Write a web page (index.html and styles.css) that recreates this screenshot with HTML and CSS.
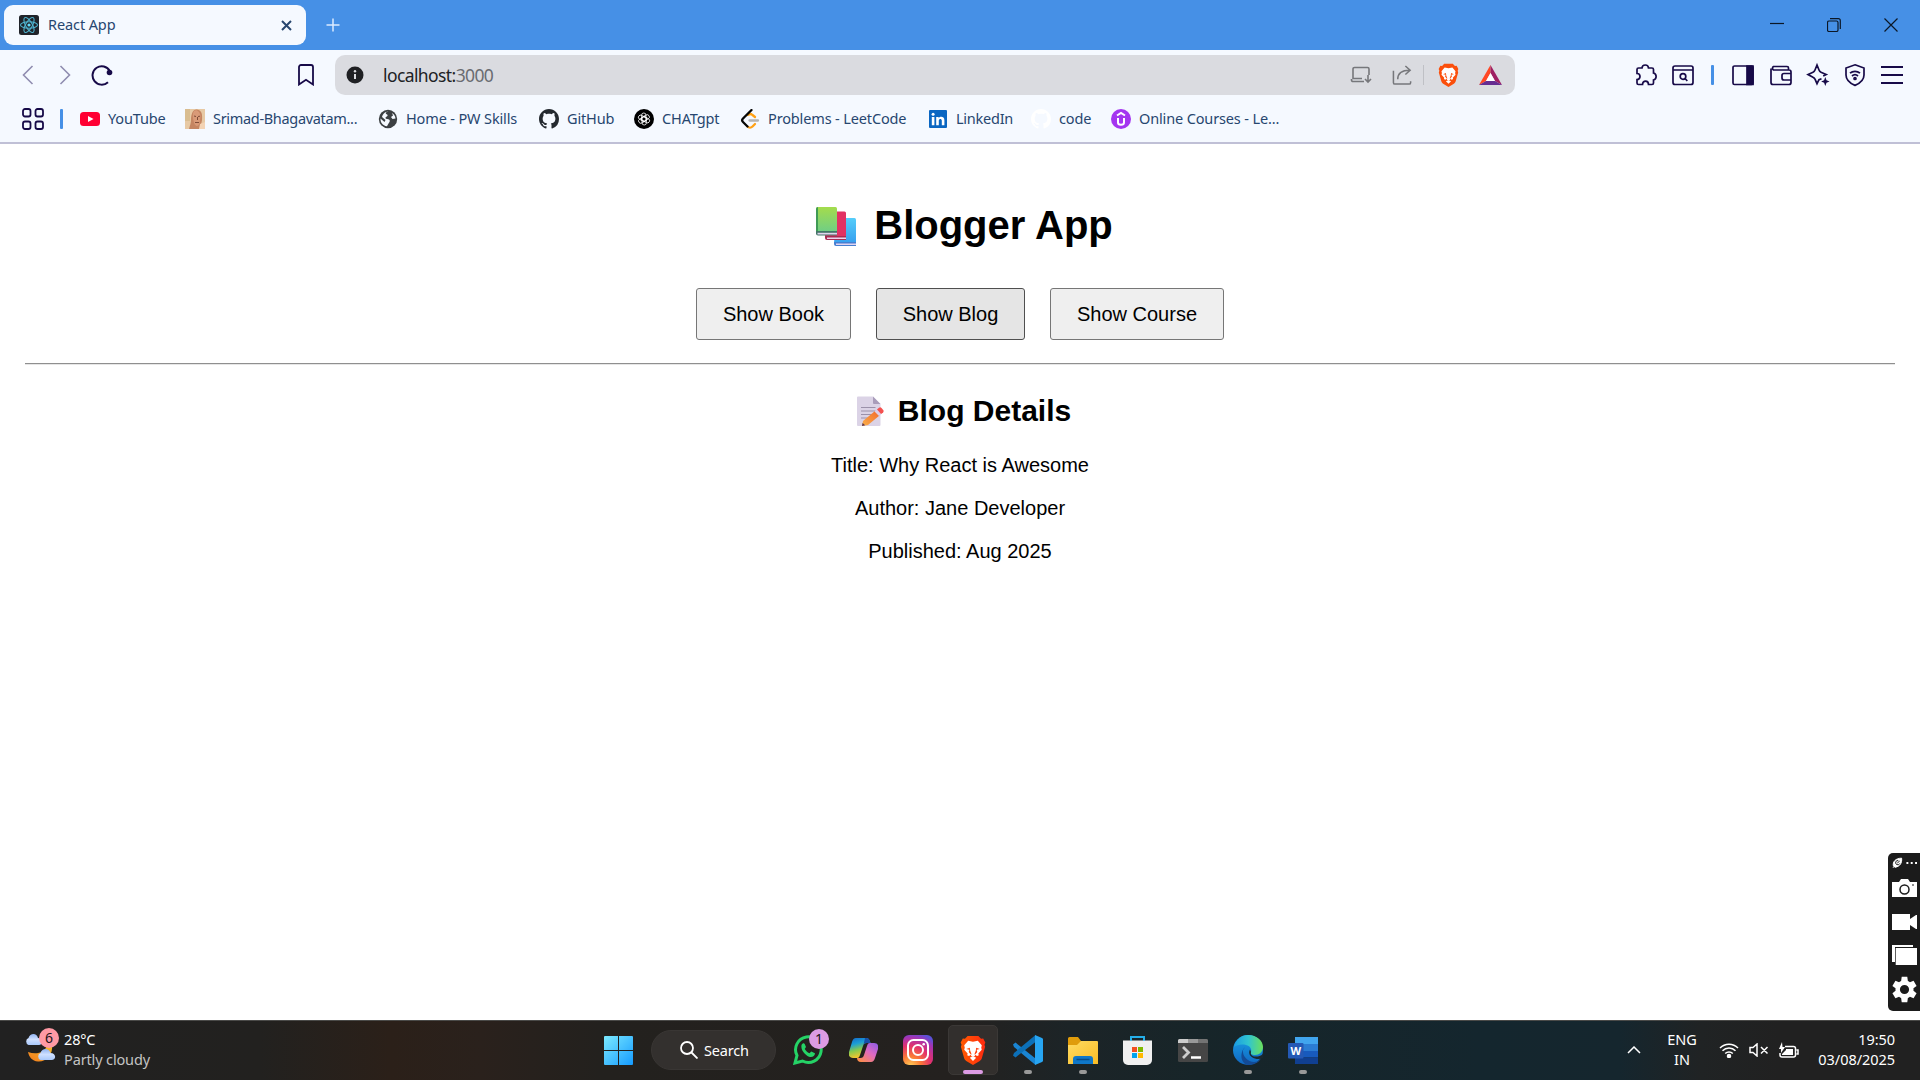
FILE: index.html
```
<!DOCTYPE html>
<html lang="en">
<head>
<meta charset="utf-8">
<title>React App</title>
<link rel="stylesheet" href="styles.css">
</head>
<body>
<svg width="0" height="0" class="defs" aria-hidden="true">
  <defs>
    <linearGradient id="braveGrad" x1="0" x2="1"><stop offset="0" stop-color="#ff5a00"/><stop offset="1" stop-color="#ff2a10"/></linearGradient>
    <symbol id="brave" viewBox="0 0 24 28">
      <path d="M7 1h10l2.500 2.600 2-.4L23.500 7l-.8 2 .6 2-3 10.500c-.4 1.200-1 2-2 2.700L12 28l-6.300-3.800c-1-.7-1.600-1.500-2-2.700L.7 11l.6-2-.8-2 2-3.800 2 .4z"/>
      <path fill="#fff" d="M12 6.200l4.500-.9 3.700 4.300-.5 2.200.5 2-3.200 3.400.4 1.600-1.600.8-2-1.200 2.200-2.600-.7-2 3-.8-3.300-1.200-.4 3-1.100 2.800.4 1.900-1.900.9-1.900-.9.400-1.900-1.100-2.800-.4-3-3.300 1.200 3 .8-.7 2 2.200 2.600-2 1.200-1.600-.8.400-1.600-3.200-3.400.5-2-.5-2.200 3.700-4.300zM12 19.800l3 1.500L12 24.200l-3-2.900z"/>
    </symbol>
    <symbol id="octocat" viewBox="0 0 16 16"><path d="M8 0C3.580 0 0 3.580 0 8c0 3.540 2.290 6.530 5.470 7.590.4.070.55-.17.55-.38 0-.19-.01-.82-.01-1.490-2.010.37-2.530-.49-2.690-.94-.09-.23-.48-.94-.82-1.130-.28-.15-.68-.52-.01-.53.63-.01 1.080.58 1.230.82.72 1.210 1.870.87 2.330.66.07-.52.28-.87.51-1.070-1.780-.2-3.640-.89-3.640-3.950 0-.87.31-1.590.82-2.150-.08-.2-.36-1.020.08-2.120 0 0 .67-.21 2.200.82.64-.18 1.320-.27 2-.27s1.360.09 2 .27c1.530-1.040 2.200-.82 2.200-.82.44 1.100.16 1.920.08 2.120.51.56.82 1.270.82 2.150 0 3.070-1.870 3.750-3.650 3.950.29.25.54.73.54 1.480 0 1.070-.01 1.930-.01 2.200 0 .21.15.46.55.38A8.010 8.010 0 0 0 16 8c0-4.420-3.580-8-8-8z"/></symbol>
  </defs>
</svg>

<div class="browser">
  <header class="tab-strip">
    <div class="tab">
      <svg class="favicon" viewBox="0 0 20 20"><rect width="20" height="20" rx="2.500" fill="#20232a"/><g fill="none" stroke="#4fb4d0" stroke-width="1.100"><ellipse cx="10" cy="10" rx="8.500" ry="3.300"/><ellipse cx="10" cy="10" rx="8.500" ry="3.300" transform="rotate(60 10 10)"/><ellipse cx="10" cy="10" rx="8.500" ry="3.300" transform="rotate(120 10 10)"/></g><circle cx="10" cy="10" r="1.600" fill="#61dafb"/></svg>
      <span class="tab-title">React App</span>
      <svg class="tab-close" viewBox="0 0 11 11"><path d="M1 1l9 9M10 1l-9 9"/></svg>
    </div>
    <svg class="new-tab" viewBox="0 0 14 14"><path d="M7 .5v13M.5 7h13"/></svg>
    <div class="window-controls">
      <svg viewBox="0 0 14 14"><path d="M0 5.500h14"/></svg>
      <svg viewBox="0 0 14 14"><rect x=".5" y="3" width="10.500" height="10.500" rx="1.500"/><path d="M3 .7h8.300a2 2 0 0 1 2 2V11"/></svg>
      <svg viewBox="0 0 14 14"><path d="M.5 .5l13 13M13.500 .5l-13 13"/></svg>
    </div>
  </header>

  <div class="toolbar">
    <svg class="nav-back" viewBox="0 0 12 20"><path d="M10.500 1L1.500 10l9 9"/></svg>
    <svg class="nav-forward" viewBox="0 0 12 20"><path d="M1.500 1l9 9-9 9"/></svg>
    <svg class="nav-reload" viewBox="0 0 22 22"><path d="M17 18.200A9.200 9.200 0 1 1 18.800 7"/><circle cx="18.500" cy="8.500" r="2.800"/></svg>
    <svg class="bookmark" viewBox="0 0 16 22"><path d="M1 3a2 2 0 0 1 2-2h10a2 2 0 0 1 2 2v17.500l-7-4.700-7 4.700z"/></svg>
    <div class="address-bar">
      <svg class="info" viewBox="0 0 18 18"><circle cx="9" cy="9" r="8.500" fill="#1f2023"/><path d="M9 8v5" stroke="#dcdce0" stroke-width="2"/><circle cx="9" cy="5.300" r="1.200" fill="#dcdce0"/></svg>
      <span class="url">localhost:<span class="port">3000</span></span>
      <svg class="gray install" viewBox="0 0 22 18"><path d="M12 12.500H3V3a1.500 1.500 0 0 1 1.500-1.500h13A1.500 1.500 0 0 1 19 3v6M1.500 13v1a1.500 1.500 0 0 0 1.500 1.500h11M18 9v6.500M15 13l3 3 3-3"/></svg>
      <svg class="gray share" viewBox="0 0 22 22"><path d="M1.500 6v12.500A1.500 1.500 0 0 0 3 20h15a1.500 1.500 0 0 0 1.500-1.500V17M6 15c0-6 3-9.500 12.500-9.500M14 1l5 4.500-5 4.500"/></svg>
      <span class="divider"></span>
      <svg class="shield"><use href="#brave"/></svg>
      <svg class="rewards" viewBox="0 0 23 20"><path d="M11.500 0L0 20l7-4 4.500-8z" fill="#ff4724"/><path d="M11.500 0L23 20l-7-4-4.500-8z" fill="#9e1f63"/><path d="M0 20h23l-7-4H7z" fill="#662d91"/><path d="M11.500 8L16 16H7z" fill="#fff"/></svg>
    </div>
    <div class="extensions">
      <svg viewBox="0 0 22 22"><path d="M2 5.500A1.500 1.500 0 0 1 3.500 4H7c.2-4 6.300-4 6.500 0H17a1.500 1.500 0 0 1 1.500 1.500V9c3.500 1 3.500 6 0 7v3a1.500 1.500 0 0 1-1.500 1.500h-3.500c0-4.500-6-4.500-6 0h-4A1.500 1.500 0 0 1 2 19v-3.500c4 0 4-6 0-6z"/></svg>
      <svg viewBox="0 0 22 22"><rect x="1" y="2" width="20" height="18.500" rx="2"/><path d="M1 6h20M13.300 14.800l2 2.200"/><circle cx="11" cy="12.500" r="2.800"/></svg>
      <span class="blue-divider"></span>
      <svg viewBox="0 0 22 22"><rect x="1" y="2" width="20" height="18.500" rx="1.500"/><path d="M15 2h6v18.500h-6z" fill="#170a48"/></svg>
      <svg viewBox="0 0 22 22"><path d="M18.500 5.500V4A1.500 1.500 0 0 0 17 2.500H3.500a2 2 0 0 0 0 3.500H19a2 2 0 0 1 2 2v10.500a2 2 0 0 1-2 2H3a2 2 0 0 1-2-2V4.500M21 9.500h-7a2 2 0 0 0-2 2v2.500a2 2 0 0 0 2 2h7"/></svg>
      <svg viewBox="0 0 22 22"><path d="M14.500 14.700l-2.500 1-2 4-2-4.500c-.4-1-1.200-1.600-2-2L1 10.500l5-2.300c1-.4 1.600-1.200 2-2.200L10 1l2 5c.4 1 1 1.800 2 2.200l5.200 2.300-3 1.500"/><path d="M18.300 13l1.200 3.300 3 1.200-3 1.200-1.200 3.300-1.200-3.300-3-1.200 3-1.200z" fill="#170a48" stroke="none"/></svg>
      <svg viewBox="0 0 22 22"><path d="M11 .8l9 3.200v7c0 5-3.800 8.200-9 10.400C5.800 19.200 2 16 2 11V4zM6 9.200a7.500 7.500 0 0 1 10 0M8 12a4.500 4.500 0 0 1 6 0"/><circle cx="11" cy="14.500" r="1"/></svg>
      <svg viewBox="0 0 22 22"><path d="M0 3h22M0 11h22M0 19h22" stroke-width="2"/></svg>
    </div>
  </div>

  <nav class="bookmarks">
    <svg class="apps" viewBox="0 0 22 22"><rect x="1" y="1" width="7.500" height="7.500" rx="2"/><rect x="13.500" y="1" width="7.500" height="7.500" rx="2"/><rect x="1" y="13.500" width="7.500" height="7.500" rx="2"/><rect x="13.500" y="13.500" width="7.500" height="7.500" rx="2"/></svg>
    <span class="blue-divider"></span>
    <div class="mark youtube"><svg viewBox="0 0 20 20"><rect y="3" width="20" height="14" rx="3.500" fill="#f03"/><path d="M8 7l5.500 3L8 13z" fill="#fff"/></svg><span>YouTube</span></div>
    <div class="mark srimad"><svg viewBox="0 0 20 20"><path d="M0 0h20v20H0z" fill="#e7c9a4"/><path d="M0 0h5v12H0z" fill="#d9bd90"/><path d="M4 20c1-4 2-6 2-9 0-6 2-11 6-10.500C17 1 17.500 6 17 11c-.4 4-2 5-2 9z" fill="#c58562"/><path d="M9 2c3-2 6 1 6.500 5l-1 8c-2 3-4 2-5 0C8 11 7 5 9 2z" fill="#d99a78"/><path d="M9 7l2 .5M13 7.500l2-.3M10 13.500h4M12.500 8v3" stroke="#754331" stroke-width=".9"/><path d="M15 15l5-2v7h-6z" fill="#f3d3b4"/></svg><span>Srimad-Bhagavatam...</span></div>
    <div class="mark pw"><svg viewBox="0 0 20 20"><circle cx="10" cy="10" r="9.200" fill="#3c4043"/><path d="M10.500 2.500c-3 .5-3.500 2-1.500 3 1.500.8 0 2-1 2.500-1 .7-.5 2 1 2 2 0 3.500 1 2.500 3-1 1.500-1.500 2.500-2.500 4.300C4.500 16.500 2.300 13.500 2.500 9.500l4 3.500 1-2L4 8c.8-3.300 3.500-5.500 6.500-5.500zM14 4c2 1.200 3.300 3.200 3.500 5.500l-3 .5-1.500-2 2-1.500z" fill="#f5f9ff"/></svg><span>Home - PW Skills</span></div>
    <div class="mark github"><svg fill="#24292f"><use href="#octocat"/></svg><span>GitHub</span></div>
    <div class="mark gpt"><svg viewBox="0 0 20 20"><circle cx="10" cy="10" r="10"/><g fill="none" stroke="#fff" stroke-width=".8"><rect x="7.600" y="4" width="4.400" height="8.500" rx="2.200"/><rect x="7.600" y="4" width="4.400" height="8.500" rx="2.200" transform="rotate(60 10 10)"/><rect x="7.600" y="4" width="4.400" height="8.500" rx="2.200" transform="rotate(120 10 10)"/><rect x="7.600" y="4" width="4.400" height="8.500" rx="2.200" transform="rotate(180 10 10)"/><rect x="7.600" y="4" width="4.400" height="8.500" rx="2.200" transform="rotate(240 10 10)"/><rect x="7.600" y="4" width="4.400" height="8.500" rx="2.200" transform="rotate(300 10 10)"/></g></svg><span>CHATgpt</span></div>
    <div class="mark leet"><svg viewBox="0 0 20 20" fill="none" stroke-width="2.300" stroke-linecap="round"><path d="M8 6c1.500-1.300 3-1.300 4.500 0L15 8M15 15l-2.500 2.500c-1.500 1.500-3.500 1.500-5 0" stroke="#ffa116"/><path d="M9.500 11.500H18" stroke="#b3b3b3"/><path d="M11.500 1L3 9.500c-1 1-1 2.500 0 3.500l4.500 4.500" stroke="#070706"/></svg><span>Problems - LeetCode</span></div>
    <div class="mark linkedin"><svg viewBox="0 0 20 20"><rect x="1" y="1" width="18" height="18" rx="1" fill="#0a66c2"/><path d="M3.800 8h2.600v8.200H3.800zM8.200 8h2.500v1.200c1.200-2.100 5.700-2 5.700 2v5h-2.600v-4.500c0-2.200-3-2-3 0v4.500H8.200z" fill="#fff"/><circle cx="5.100" cy="5.200" r="1.500" fill="#fff"/></svg><span>LinkedIn</span></div>
    <div class="mark code"><svg fill="#fff"><use href="#octocat"/></svg><span>code</span></div>
    <div class="mark courses"><svg viewBox="0 0 20 20"><circle cx="10" cy="10" r="10" fill="#a435f0"/><path d="M6 6.500l4-2.500 4 2.500M7 9v4.500c0 3 6 3 6 0V9" fill="none" stroke="#fff" stroke-width="2"/></svg><span>Online Courses - Le...</span></div>
  </nav>
</div>

<main class="page">
  <h1>
    <svg class="books" viewBox="0 0 40 40"><defs><linearGradient id="gb" x2="0" y2="1"><stop stop-color="#a4dc4c"/><stop offset="1" stop-color="#6fce86"/></linearGradient><linearGradient id="bb" x2="0" y2="1"><stop stop-color="#55cdfa"/><stop offset="1" stop-color="#369fee"/></linearGradient></defs>
      <path d="M20 11h18.500a1.500 1.500 0 0 1 1.500 1.500V36H18z" fill="url(#bb)"/><path d="M18 35h22v4H20a2 2 0 0 1-2-2z" fill="#477fd0"/><path d="M20 36.500h20v1.500H20z" fill="#e0d4f2"/>
      <path d="M9 4.500h19.500A1.500 1.500 0 0 1 30 6v24H9z" fill="#e23163"/><path d="M9 29h21v4H11a2 2 0 0 1-2-2z" fill="#a92b53"/><path d="M11 30.500h19V32H11z" fill="#ecd5ef"/>
      <path d="M2 0h17.500A1.500 1.500 0 0 1 21 1.500V25H0V2a2 2 0 0 1 2-2z" fill="url(#gb)"/><path d="M0 2a2 2 0 0 1 2-2v25H0z" fill="#3f9a55"/><path d="M0 24h21v4.500H2a2 2 0 0 1-2-2z" fill="#447668"/><path d="M1.500 25.800H21v1.700H1.500z" fill="#e3d3ee"/></svg>
    <span>Blogger App</span>
  </h1>
  <div class="actions">
    <button class="show-book">Show Book</button>
    <button class="show-blog hovered">Show Blog</button>
    <button class="show-course">Show Course</button>
  </div>
  <hr>
  <section>
    <h2>
      <svg class="memo" viewBox="0 0 27 30"><defs><linearGradient id="pen" x1="0" y1="1" x2="1" y2="0"><stop stop-color="#f9b04b"/><stop offset="1" stop-color="#f3692c"/></linearGradient></defs><path d="M0 1.500A1 1 0 0 1 1 .5h15l7.500 7.500v21a1 1 0 0 1-1 1H1a1 1 0 0 1-1-1z" fill="#dbd3e6"/><path d="M16 .5L23.500 8H17a1 1 0 0 1-1-1z" fill="#a99cba"/><path d="M4 11.500h14.500M4 15h14.500M4 18.500h11M4 22h8" stroke="#9b91aa" stroke-width="1.200"/><path d="M5 30l1-5L18 15l4.500 4.500L11 29z" fill="url(#pen)"/><path d="M5 30l.6-3 2.600 2.300z" fill="#5b3555"/><path d="M17.500 15.500l3-2.300 4 4.500-2.500 2.300z" fill="#dccfe9"/><path d="M20 13.500l2-1.700a2 2 0 0 1 2.500.1l1.700 2a2 2 0 0 1-.1 2.500l-2 1.600z" fill="#f4514f"/></svg>
      <span>Blog Details</span>
    </h2>
    <p>Title: Why React is Awesome</p>
    <p>Author: Jane Developer</p>
    <p>Published: Aug 2025</p>
  </section>
</main>

<aside class="recorder">
  <svg class="rec-top" viewBox="0 0 26 12"><path d="M1.500 9C.5 5 3.500 1 10 1c.5 5-1.500 8.500-7 9.500zM1 11l2-2" fill="#fff" stroke="#fff"/><path d="M6.500 3.500a2.200 2.200 0 1 0 1.500 3M5.500 6L8 4" fill="none" stroke="#1b1b1b"/><path d="M15 5h2v2h-2zM19.500 5h2v2h-2zM24 5h2v2h-2z" fill="#fff"/></svg>
  <svg class="rec-photo" viewBox="0 0 25 18"><path d="M0 3h7l2-3h7l2 3h7v15H0z" fill="#fff"/><circle cx="12.500" cy="10.500" r="4.500" fill="none" stroke="#1b1b1b" stroke-width="1.500"/><path d="M20 6h2" stroke="#1b1b1b"/></svg>
  <svg class="rec-video" viewBox="0 0 25 16"><path d="M0 0h18v5l6-4h1v14h-1l-6-4v5H0z" fill="#fff"/></svg>
  <svg class="rec-window" viewBox="0 0 25 20"><path d="M0 0h21v2H3v15H0zM3.700 3H25v17H3.700z" fill="#fff"/></svg>
  <svg class="rec-gear" viewBox="0 0 24 24"><path fill="#fff" fill-rule="evenodd" d="M19.400 13c.1-.7.1-1.300 0-2l2.600-2-2.500-4.300-3 1.200a8 8 0 0 0-1.700-1L14.300 1.500H9.700l-.5 3.400a8 8 0 0 0-1.700 1l-3-1.200L2 9l2.600 2c-.1.700-.1 1.300 0 2L2 15l2.500 4.300 3-1.200c.5.400 1.100.7 1.700 1l.5 3.400h4.600l.5-3.400c.6-.3 1.200-.6 1.700-1l3 1.200L22 15zM12 8.200a3.800 3.800 0 1 1 0 7.600 3.800 3.800 0 0 1 0-7.600z"/></svg>
</aside>

<footer class="taskbar">
  <div class="weather">
    <div class="weather-icon">
      <svg viewBox="0 0 31 32"><defs><linearGradient id="cl" x2="0" y2="1"><stop stop-color="#8fb2f0"/><stop offset=".5" stop-color="#cfe0ff"/><stop offset="1" stop-color="#a9c8fa"/></linearGradient><linearGradient id="moon" x1="0" y1="1" x2="1" y2="0"><stop stop-color="#f07a1c"/><stop offset="1" stop-color="#f7c02e"/></linearGradient></defs><path d="M27 12c1.500 11-6 18-14 17.500C7 29 4 25 3 20c8 3 17 1 19-7z" fill="url(#moon)"/><path d="M3.500 13a3.800 3.800 0 0 1 0-7C5 .5 12 .5 13 6c5 0 5 7 1 7z" fill="url(#cl)"/><path d="M15.500 28a3.800 3.800 0 0 1 0-7C17 15.500 24 15.500 25.500 21c6 0 6 7 1 7z" fill="url(#cl)"/></svg>
      <span class="count">6</span>
    </div>
    <div class="weather-text"><span>28°C</span><span class="dim">Partly cloudy</span></div>
  </div>

  <div class="apps-row">
    <div class="app"><svg width="29" height="29" viewBox="0 0 29 29"><defs><linearGradient id="win" x2="1" y2="1"><stop stop-color="#7ceaff"/><stop offset="1" stop-color="#159bff"/></linearGradient></defs><path d="M0 1a1 1 0 0 1 1-1h13v14H0zM15 0h13a1 1 0 0 1 1 1v13H15zM0 15h14v14H1a1 1 0 0 1-1-1zM15 15h14v13a1 1 0 0 1-1 1H15z" fill="url(#win)"/></svg></div>
    <div class="search"><svg viewBox="0 0 18 18"><circle cx="7" cy="7" r="6"/><path d="M11.500 11.500l6 6"/></svg><span>Search</span></div>
    <div class="app"><svg width="30" height="30" viewBox="0 0 30 30"><path d="M2 28l2-7.500A12.800 12.800 0 1 1 9.500 26z" fill="none" stroke="#25d366" stroke-width="3"/><path d="M8.500 10c1-2 2.500-2.500 3.200-1l1.300 3-1.300 2c1.300 2 2.500 3.200 4.800 4.200l1.700-1.800 3.800 1.800c0 3-3 4.500-6 3.500C12 20 7.500 15 8.500 10z" fill="#25d366"/></svg><span class="notify">1</span></div>
    <div class="app"><svg width="29" height="26" viewBox="0 0 29 26"><defs><linearGradient id="c1" x2=".3" y2="1"><stop stop-color="#1466c8"/><stop offset=".35" stop-color="#1b9fd6"/><stop offset=".65" stop-color="#85ca4f"/><stop offset="1" stop-color="#f6c52e"/></linearGradient><linearGradient id="c2" x1="1" x2=".2" y2="1"><stop stop-color="#8a5be8"/><stop offset=".5" stop-color="#df6ac2"/><stop offset="1" stop-color="#fb8b4c"/></linearGradient></defs><path d="M7 1h10c3 0 3.500 2 4.500 5h-4c-2 0-3 1-3.500 3l-3 9c-.7 2-1 3-3 3H4c-3 0-5-2-4-6L3 5c.8-2.500 2-4 4-4z" fill="url(#c1)"/><path d="M22 25H12c-3 0-4-2-4-4h3.500c2 0 3-1 3.500-3l3-9c.7-2 1-3 3-3h4c3 0 5 2 4 6l-3 9c-.8 2.500-2 4-4 4z" fill="url(#c2)"/><path d="M16 1h1c3 0 4 2 4.500 5h-4c-1.500 0-2.500.7-3 1.800z" fill="#174fa8"/></svg></div>
    <div class="app"><svg width="30" height="30" viewBox="0 0 30 30"><defs><radialGradient id="ig" cx=".25" cy="1.050" r="1.150"><stop stop-color="#ffd35c"/><stop offset=".3" stop-color="#fb7a36"/><stop offset=".6" stop-color="#e2306c"/><stop offset=".85" stop-color="#a234b5"/><stop offset="1" stop-color="#5b51d8"/></radialGradient></defs><rect width="30" height="30" rx="6" fill="url(#ig)"/><g fill="none" stroke="#fff" stroke-width="2"><rect x="5" y="5" width="20" height="20" rx="5.500"/><circle cx="15" cy="15" r="5"/></g><circle cx="20.700" cy="9.300" r="1.300" fill="#fff"/></svg></div>
    <div class="app active"><svg width="26" height="30" fill="url(#braveGrad)"><use href="#brave"/></svg></div>
    <div class="app running"><svg width="30" height="30" viewBox="0 0 30 30"><path d="M0 9.500L2.500 7.500l20 16V30L1 12z" fill="#1a85d3"/><path d="M0 20.500l2.500 2L22.500 7V0L1 18z" fill="#0c70b8"/><path d="M22 0l7 3a2 2 0 0 1 1 2v20a2 2 0 0 1-1 2l-7 3z" fill="#27a5f2"/></svg></div>
    <div class="app running"><svg width="30" height="27" viewBox="0 0 30 27"><defs><linearGradient id="fo" x2="1" y2="1"><stop stop-color="#ffdb62"/><stop offset="1" stop-color="#f9bc25"/></linearGradient></defs><path d="M0 1.500A1.500 1.500 0 0 1 1.500 0H10l3 4v5H0z" fill="#e09c0b"/><path d="M0 8h9l4-4h16a1 1 0 0 1 1 1v22H0z" fill="url(#fo)"/><path d="M5 27v-5a3 3 0 0 1 3-3h14a3 3 0 0 1 3 3v5z" fill="#0f77c8"/><path d="M8.500 22.500h13" stroke="#064c88" stroke-width="1.500"/></svg></div>
    <div class="app store"><svg width="29" height="30" viewBox="0 0 29 30"><path d="M8 7V2h13v5" fill="none" stroke="#24aee8" stroke-width="2"/><path d="M0 5.500h29V25a5 5 0 0 1-5 5H5a5 5 0 0 1-5-5z" fill="#f0f0f0"/><path d="M8 5.500V2h13v3.500" fill="none" stroke="#24aee8" stroke-width="2"/><path d="M9 12h5v5H9z" fill="#f25022"/><path d="M15 12h5v5h-5z" fill="#7fba00"/><path d="M9 18h5v5H9z" fill="#00a4ef"/><path d="M15 18h5v5h-5z" fill="#ffb900"/></svg></div>
    <div class="app"><svg width="30" height="23" viewBox="0 0 30 23"><rect width="30" height="23" rx="1.500" fill="#464646"/><path d="M0 4V1.500A1.500 1.500 0 0 1 1.500 0H10v4z" fill="#ccc"/><path d="M10 0h10v4H10z" fill="#999"/><path d="M20 0h8.500A1.500 1.500 0 0 1 30 1.500V4H20z" fill="#737373"/><path d="M5 8l5.500 5.500L5 19" fill="none" stroke="#ccc" stroke-width="2.800"/><path d="M13 18.500h10" stroke="#fff" stroke-width="2.500"/></svg></div>
    <div class="app running"><svg width="30" height="30" viewBox="0 0 30 30"><defs><linearGradient id="e1"><stop stop-color="#1b9de2"/><stop offset=".5" stop-color="#31c5cf"/><stop offset="1" stop-color="#6be05b"/></linearGradient><linearGradient id="e2" x2="0" y2="1"><stop stop-color="#1aa2e6"/><stop offset="1" stop-color="#1066c1"/></linearGradient></defs><circle cx="15" cy="15" r="15" fill="url(#e2)"/><path d="M1 12C3 4 9 0 15 0c9 0 15 6 15 12 0 5-4 8-8 8-3 0-5-1-4-3 1-3-1-6-5-7-5-1-9 0-12 2z" fill="url(#e1)"/><path d="M10 15c-1 6 5 12 11 12 3 0 5-1 7-3-3 4-8 6-13 6C8 29 6 18 12 12z" fill="#134b96"/><path d="M18 17c-1 3 2 4.500 5 4.500 3 0 5-1 8-3v4c-6 4-18 0-14-8z" fill="#1b282e"/></svg></div>
    <div class="app running"><svg width="30" height="27" viewBox="0 0 30 27"><path d="M7 0h23v7H7z" fill="#41a5ee"/><path d="M7 7h23v7H7z" fill="#2b7cd3"/><path d="M7 14h23v6.500H7z" fill="#185abd"/><path d="M7 20.500h23V27H7z" fill="#103f91"/><rect y="6" width="15.500" height="15.500" rx="1" fill="#2459b5"/><text x="7.700" y="18" class="word-letter">W</text></svg></div>
  </div>

  <div class="tray">
    <svg class="chevron" viewBox="0 0 14 8"><path d="M1 7l6-6 6 6"/></svg>
    <div class="lang"><span>ENG</span><span>IN</span></div>
    <svg class="wifi" viewBox="0 0 20 16"><path d="M1 6a12.700 12.700 0 0 1 18 0M3.500 8.800a9 9 0 0 1 13 0M6.200 11.500a5.300 5.300 0 0 1 7.600 0"/><circle cx="10" cy="14" r="1.500" fill="#fff"/></svg>
    <svg class="volume" viewBox="0 0 20 14"><path d="M1 4.500h3L8 1v12L4 9.500H1zM12 4l6.500 6.500M18.500 4L12 10.500"/></svg>
    <svg class="battery" viewBox="0 0 21 17"><path d="M7 4.500h8.500a2 2 0 0 1 2 2V13a2 2 0 0 1-2 2H4a2 2 0 0 1-2-2v-2M18.500 8h1.500v4h-1.500"/><path d="M8 7h7v6H4v-1l4-4zM4 0L1 7h2v4l4-6H4.500z" fill="#fff" stroke="none"/></svg>
    <div class="clock"><span>19:50</span><span>03/08/2025</span></div>
  </div>
</footer>
</body>
</html>
```
FILE: styles.css
```
* { box-sizing: border-box; }
html, body { height: 100%; }
body {
  margin: 0;
  display: flex;
  flex-direction: column;
  overflow: hidden;
  position: relative;
  background: #fff;
  color: #000;
  font-family: "Noto Sans", sans-serif;
}
svg { display: block; flex: none; }
.defs { position: absolute; }

/* Browser frame */
.browser { flex: none; height: 144px; background: #f5f9ff; border-bottom: 2px solid #c0c0d6; }
.tab-strip { display: flex; align-items: center; height: 50px; padding-left: 4px; background: #4690e6; }
.tab {
  display: flex;
  align-items: center;
  width: 302px;
  height: 40px;
  padding: 0 14px 0 15px;
  background: #f5f9ff;
  border-radius: 9px;
}
.favicon { width: 20px; height: 20px; }
.tab-title { margin: 0 0 2px 9px; font-size: 14.500px; color: #27466f; letter-spacing: -0.100px; }
.tab-close { width: 11px; height: 11px; margin-left: auto; fill: none; stroke: #27466f; stroke-width: 2; }
.new-tab { width: 14px; height: 14px; margin-left: 20px; stroke: #dceaff; stroke-width: 1.500; }
.window-controls { display: flex; gap: 43px; margin-left: auto; padding: 0 22px 1px 0; }
.window-controls svg { width: 14px; height: 14px; fill: none; stroke: #0b1726; stroke-width: 1.200; }

.toolbar { display: flex; align-items: center; height: 50px; padding: 0 17px 0 22px; }
.nav-back, .nav-forward { width: 12px; height: 20px; fill: none; stroke: #908db0; stroke-width: 1.600; }
.nav-forward { margin-left: 25px; }
.nav-reload { width: 22px; height: 22px; margin-left: 20px; fill: none; stroke: #170a48; stroke-width: 2; }
.nav-reload circle { fill: #170a48; stroke: none; }
.bookmark { width: 16px; height: 22px; margin-left: 185px; fill: none; stroke: #170a48; stroke-width: 1.800; }
.address-bar {
  display: flex;
  align-items: center;
  width: 1180px;
  height: 40px;
  margin-left: 21px;
  padding: 0 13px 0 11px;
  background: #dadbe0;
  border-radius: 10px;
}
.info { width: 18px; height: 18px; }
.url { margin: 0 0 1px 19px; font-size: 17.500px; letter-spacing: -0.600px; color: #202124; }
.port { color: #6a6c71; }
.gray { fill: none; stroke: #76777b; stroke-width: 1.600; }
.install { width: 22px; height: 18px; margin-left: auto; }
.share { width: 21px; height: 21px; margin-left: 20px; }
.divider { width: 1px; height: 20px; margin: 0 14px 0 10px; background: #bfc0c5; }
.shield { width: 21px; height: 24px; fill: #fb4f0c; }
.rewards { width: 23px; height: 20px; margin-left: 20px; }
.extensions { display: flex; align-items: center; gap: 15px; margin-left: auto; }
.extensions svg { width: 22px; height: 22px; overflow: visible; fill: none; stroke: #170a48; stroke-width: 1.700; }
.blue-divider { flex: none; width: 3px; height: 20px; background: #4690e6; border-radius: 1px; }
.extensions .blue-divider { margin: 0 3px 0 2px; }
.extensions .blue-divider + svg { margin-right: 1px; }

.bookmarks { display: flex; align-items: center; height: 38px; padding-left: 22px; }
.bookmarks .blue-divider { margin: 0 19px 0 16px; }
.apps { width: 22px; height: 22px; fill: none; stroke: #170a48; stroke-width: 1.800; }
.mark { display: flex; align-items: center; gap: 8px; font-size: 14.500px; letter-spacing: -0.140px; color: #27466f; white-space: nowrap; }
.mark svg { width: 20px; height: 20px; }
.mark span { padding-bottom: 2px; }
.youtube { width: 105px; margin-left: -2px; }
.srimad { width: 193px; letter-spacing: -0.320px; }
.pw { width: 161px; }
.github { width: 95px; }
.gpt { width: 106px; }
.leet { width: 188px; }
.linkedin { width: 103px; letter-spacing: -0.250px; }
.code { width: 80px; }

/* Blog page */
.page {
  flex: 1;
  padding: 25px;
  display: flex;
  flex-direction: column;
  font: 20px/23px "Liberation Sans", Arial, sans-serif;
  text-align: center;
}
h1, h2 { display: flex; align-items: center; justify-content: center; }
h1 { height: 46px; margin: 33px 0 40px; font-size: 40px; line-height: 46px; gap: 18px; padding-left: 9px; }
.books { width: 40px; height: 40px; margin-top: 3px; }
.actions { display: flex; justify-content: center; gap: 25px; }
button {
  height: 52px;
  padding: 0;
  font: 20px "Liberation Sans", Arial, sans-serif;
  color: #000;
  background: #efefef;
  border: 1px solid #767676;
  border-radius: 3px;
}
.show-book { width: 155px; }
.show-blog { width: 149px; }
.show-course { width: 174px; }
.hovered { background: #e5e5e5; border-color: #4f4f4f; }
hr { width: 100%; height: 2px; margin: 23px 0 0; border: 0; border-top: 1px solid #8f8f8f; border-bottom: 1px solid #e6e6e6; }
h2 { height: 34px; margin: 29px 0 26px; font-size: 30px; line-height: 34px; gap: 14px; padding-left: 8px; }
.memo { width: 27px; height: 30px; }
p { margin: 0 0 20px; }

/* Capture widget docked over the page */
.recorder {
  position: absolute;
  right: 0;
  top: 853px;
  width: 32px;
  height: 158px;
  padding: 4px 3px 0 4px;
  background: #1b1b1b;
  border-radius: 5px 0 0 5px;
}
.rec-top { width: 25px; height: 12px; }
.rec-photo { width: 25px; height: 18px; margin-top: 10px; }
.rec-video { width: 25px; height: 16px; margin-top: 17px; }
.rec-window { width: 25px; height: 20px; margin-top: 15px; }
.rec-gear { width: 29px; height: 29px; margin: 10px 0 0 -2px; }

/* Taskbar */
.taskbar {
  flex: none;
  display: grid;
  grid-template-columns: 593px 1fr 300px;
  height: 60px;
  border-top: 1px solid #4a4a48;
  color: #fff;
  background: linear-gradient(90deg, #212121 0, #22211f 260px, #2b2019 390px, #2a211c 480px, #23211e 600px, #24211f 960px, #1c2427 1070px, #172529 1200px, #14262e 1480px, #15262e 1620px, #202324 1700px, #212121 1780px);
}
.weather { display: flex; padding: 8px 0 0 25px; }
.weather-icon { position: relative; width: 39px; }
.weather-icon svg { width: 31px; height: 32px; margin-top: 3px; }
.count, .notify {
  position: absolute;
  width: 20px;
  height: 20px;
  border-radius: 50%;
  font-size: 14px;
  line-height: 20px;
  text-align: center;
  color: #201318;
}
.count { left: 14px; top: -1px; background: #ff99a4; }
.weather-text { display: flex; flex-direction: column; font-size: 14.500px; line-height: 20px; letter-spacing: -0.140px; }
.dim { color: #c4c4c4; }
.apps-row { display: flex; align-items: center; gap: 5px; padding-bottom: 1px; }
.app {
  position: relative;
  display: flex;
  align-items: center;
  justify-content: center;
  width: 50px;
  height: 50px;
  border-radius: 5px;
}
.app:first-child { margin-right: 3px; }
.store { padding-right: 1px; }
.search {
  display: flex;
  align-items: center;
  width: 125px;
  height: 40px;
  margin-right: 2px;
  padding-left: 28px;
  gap: 6px;
  background: #33302e;
  border: 1px solid #393634;
  border-radius: 20px;
  font-size: 14.500px;
  letter-spacing: -0.200px;
}
.search span { padding-bottom: 1px; }
.search svg { width: 18px; height: 18px; fill: none; stroke: #fff; stroke-width: 1.800; }
.notify { left: 26px; top: 4px; background: #dc9be4; }
.active { background: #322f2d; border: 1px solid #3b3836; }
.active::after, .running::after {
  content: "";
  position: absolute;
  bottom: 1px;
  left: 50%;
  width: 8px;
  height: 4px;
  margin-left: -4px;
  border-radius: 2px;
  background: #999;
}
.active::after { bottom: 0; width: 20px; margin-left: -10px; background: #dc9be4; }
.word-letter { font: bold 11px "Open Sans", sans-serif; fill: #fff; text-anchor: middle; }

.tray { display: flex; align-items: center; padding: 0 25px 1px 7px; font-size: 14.500px; line-height: 20px; }
.tray svg { fill: none; stroke: #fff; stroke-width: 1.500; }
.chevron { width: 14px; height: 8px; }
.lang { display: flex; flex-direction: column; align-items: center; width: 30px; margin: 0 0 2px 26px; }
.wifi { width: 20px; height: 16px; margin-left: 22px; }
.volume { width: 20px; height: 14px; margin-left: 10px; }
.battery { width: 21px; height: 17px; margin-left: 9px; }
.clock { display: flex; flex-direction: column; align-items: flex-end; margin: 0 0 3px auto; letter-spacing: -0.050px; }
```
